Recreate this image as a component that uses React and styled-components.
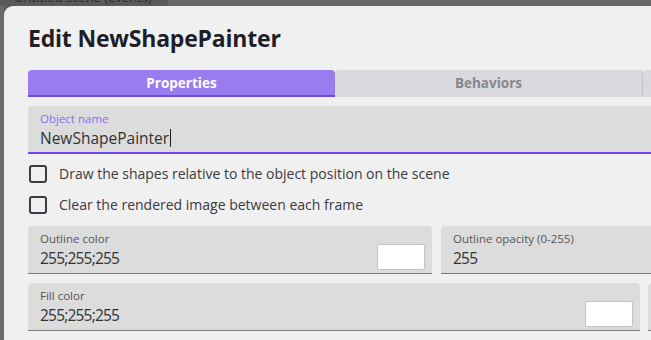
import styled, { createGlobalStyle } from 'styled-components'

const Global = createGlobalStyle`
    html, body {
        margin: 0;
        padding: 0;
        background: #5d5d5d;
        overflow: hidden;
        font-family: "Open Sans", "Noto Sans", sans-serif;
    }
`

const Backdrop = styled.div`
    width: 651px;
    height: 340px;
    overflow: hidden;
    background: linear-gradient(90deg, #6a6a6a 0 4px, #5c5c5c 4px);
`

const TopStrip = styled.div`
    height: 6px;
    overflow: hidden;
    display: flex;
    background: linear-gradient(90deg, #5a5a5a 0 168px, #686868 168px);
`

const SceneTab = styled.span`
    margin-top: -12px;
    margin-left: 14px;
    font-size: 13px;
    color: #2e2e2e;
    white-space: nowrap;
`

const Dialog = styled.div`
    margin-left: 4px;
    width: 900px;
    height: 400px;
    background: #f0f0f0;
    border-top-left-radius: 9px;
    padding: 16px 24px 0;
    box-sizing: border-box;
`

const Title = styled.h1`
    margin: 0 0 16px;
    font-size: 23px;
    font-weight: 700;
    letter-spacing: -0.2px;
    color: #1e1e28;
    line-height: 32px;
`

const Tabs = styled.div`
    display: flex;
    margin-bottom: 9px;
`

const Tab = styled.div`
    width: ${p => (p.$divider ? 308 : 307)}px;
    flex-shrink: 0;
    height: 27px;
    box-sizing: border-box;
    display: flex;
    align-items: center;
    justify-content: center;
    font-size: 13.5px;
    font-weight: 700;
    border-radius: 4px 4px 0 0;
    background: ${p => (p.$active ? '#9b7bf0' : '#dadade')};
    color: ${p => (p.$active ? '#ffffff' : '#86868c')};
    border-bottom: 2px solid ${p => (p.$active ? '#7047eb' : '#dadade')};
    border-right: ${p => (p.$divider ? '1px solid #c2c2c6' : 'none')};
`

const Field = styled.div`
    position: relative;
    box-sizing: border-box;
    width: ${p => p.$w}px;
    height: 48px;
    background: #dcdcdc;
    border-radius: 4px 4px 0 0;
    padding: 5px 12px 0;
    border-bottom: ${p => (p.$focused ? '2px solid #7047eb' : '1px solid #7a7a7a')};
    flex-shrink: 0;
`

const Label = styled.div`
    font-size: 11.5px;
    line-height: 15px;
    color: ${p => (p.$focused ? '#8a6cf0' : '#555558')};
`

const Value = styled.div`
    margin-top: 2px;
    font-size: 15.5px;
    line-height: 20px;
    letter-spacing: ${p => (p.$tight ? '-0.8px' : '0')};
    color: #333336;
    display: flex;
    align-items: center;
`

const Caret = styled.span`
    display: inline-block;
    width: 1px;
    height: 18px;
    background: #1a1a1a;
    margin-left: 1px;
`

const Swatch = styled.div`
    position: absolute;
    right: 7px;
    bottom: 3px;
    width: 46px;
    height: 24px;
    background: #ffffff;
    border: 1px solid #c4c4c4;
    border-radius: 2px;
`

const CheckRow = styled.label`
    display: flex;
    align-items: center;
    gap: 12px;
    height: 31px;
    padding-left: 1px;
    font-size: 14px;
    color: #3a3a42;
`

const Box = styled.span`
    width: 18px;
    height: 18px;
    box-sizing: border-box;
    border: 2px solid #3c3c46;
    border-radius: 3px;
    flex-shrink: 0;
`

const Checks = styled.div`
    display: flex;
    flex-direction: column;
    margin: 4px 0 6px;
`

const Row = styled.div`
    display: flex;
    gap: ${p => p.$gap || 8}px;
    margin-bottom: 9px;
`

function ColorField({ label, value, width }) {
    return (
        <Field $w={width}>
            <Label>{label}</Label>
            <Value $tight>{value}</Value>
            <Swatch />
        </Field>
    )
}

export default function App() {
    return (
        <Backdrop>
            <Global />
            <TopStrip>
                <SceneTab>Untitled scene (Events)</SceneTab>
            </TopStrip>
            <Dialog>
                <Title>Edit NewShapePainter</Title>
                <Tabs>
                    <Tab $active>Properties</Tab>
                    <Tab $divider>Behaviors</Tab>
                    <Tab>Variables</Tab>
                </Tabs>
                <Field $w={860} $focused>
                    <Label $focused>Object name</Label>
                    <Value>NewShapePainter<Caret /></Value>
                </Field>
                <Checks>
                    <CheckRow><Box />Draw the shapes relative to the object position on the scene</CheckRow>
                    <CheckRow><Box />Clear the rendered image between each frame</CheckRow>
                </Checks>
                <Row $gap={9}>
                    <ColorField label="Outline color" value="255;255;255" width={404} />
                    <Field $w={404}>
                        <Label>Outline opacity (0-255)</Label>
                        <Value $tight>255</Value>
                    </Field>
                </Row>
                <Row>
                    <ColorField label="Fill color" value="255;255;255" width={612} />
                    <Field $w={200}>
                        <Label>Fill opacity (0-255)</Label>
                        <Value $tight>255</Value>
                    </Field>
                </Row>
                <Row>
                    <Field $w={155}>
                        <Label>Outline size</Label>
                        <Value $tight>1</Value>
                    </Field>
                </Row>
            </Dialog>
        </Backdrop>
    )
}
